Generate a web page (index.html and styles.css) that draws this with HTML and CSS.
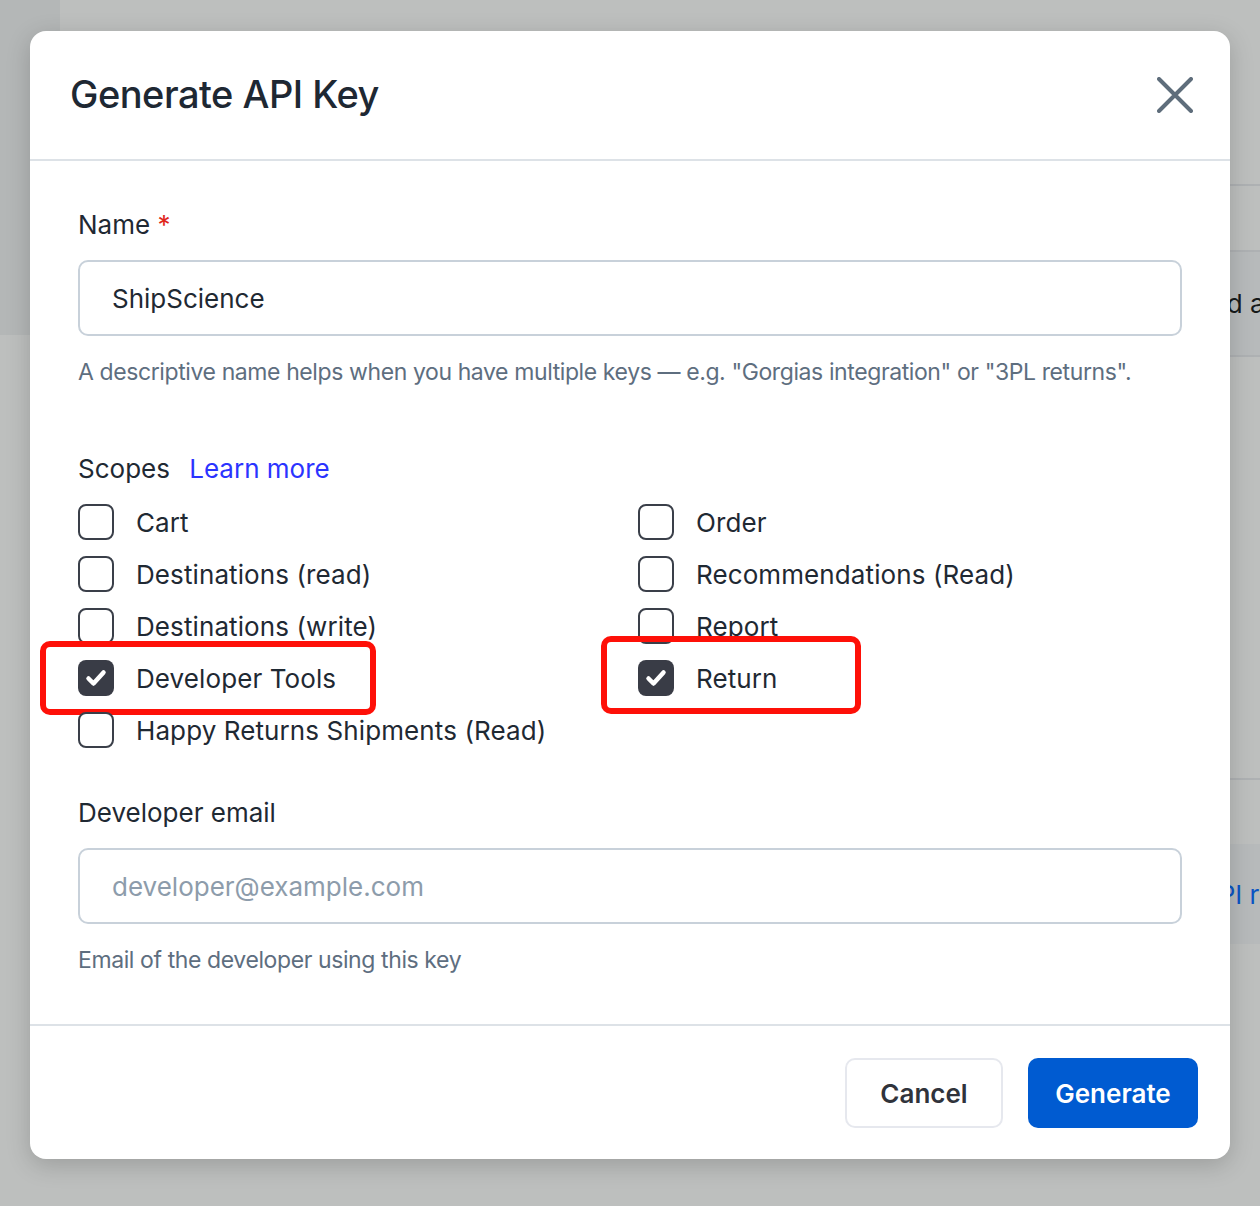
FILE: index.html
```html
<!DOCTYPE html>
<html lang="en">
<head>
    <meta charset="UTF-8">
    <meta name="viewport" content="width=device-width, initial-scale=1.0">
    <title>API Keys</title>
    <link rel="stylesheet" href="styles.css">
</head>
<body>
    <div class="page">
        <aside class="sidebar"></aside>
        <main class="content">
            <div class="row row-line"></div>
            <div class="row row-shaded"><span class="row-text">Keys you have created and</span></div>
            <div class="row row-spacer"></div>
            <div class="row row-shaded row-link"><span class="row-text link">View API reference</span></div>
        </main>
    </div>

    <div class="overlay">
        <div class="modal">
            <div class="modal-header">
                <h1>Generate API Key</h1>
                <button class="close" aria-label="Close">
                    <svg width="36" height="36" viewBox="0 0 36 36">
                        <path d="M2 2L34 34M34 2L2 34" stroke="#5e6d7b" stroke-width="4" stroke-linecap="round" fill="none"/>
                    </svg>
                </button>
            </div>

            <div class="modal-body">
                <div class="field">
                    <label class="field-label">Name <span class="required">*</span></label>
                    <input type="text" class="input" value="ShipScience">
                    <p class="hint">A descriptive name helps when you have multiple keys — e.g. "Gorgias integration" or "3PL returns".</p>
                </div>

                <div class="field scopes">
                    <div class="field-label">Scopes <a href="#" class="learn">Learn more</a></div>
                    <div class="scope-grid">
                        <div class="scope-col">
                            <label class="scope"><span class="box"></span>Cart</label>
                            <label class="scope"><span class="box"></span>Destinations (read)</label>
                            <label class="scope"><span class="box"></span>Destinations (write)</label>
                            <label class="scope">
                                <span class="box checked"><svg width="36" height="36" viewBox="0 0 36 36"><path d="M10.5 18.5L15.5 23.5L25.5 12.5" stroke="#fff" stroke-width="4.5" stroke-linecap="round" stroke-linejoin="round" fill="none"/></svg></span>Developer Tools<span class="mark mark-left"></span>
                            </label>
                            <label class="scope"><span class="box"></span>Happy Returns Shipments (Read)</label>
                        </div>
                        <div class="scope-col">
                            <label class="scope"><span class="box"></span>Order</label>
                            <label class="scope"><span class="box"></span>Recommendations (Read)</label>
                            <label class="scope"><span class="box"></span>Report</label>
                            <label class="scope">
                                <span class="box checked"><svg width="36" height="36" viewBox="0 0 36 36"><path d="M10.5 18.5L15.5 23.5L25.5 12.5" stroke="#fff" stroke-width="4.5" stroke-linecap="round" stroke-linejoin="round" fill="none"/></svg></span>Return<span class="mark mark-right"></span>
                            </label>
                        </div>
                    </div>
                </div>

                <div class="field">
                    <label class="field-label">Developer email</label>
                    <input type="email" class="input" placeholder="developer@example.com">
                    <p class="hint">Email of the developer using this key</p>
                </div>
            </div>

            <div class="modal-footer">
                <button class="btn btn-cancel">Cancel</button>
                <button class="btn btn-primary">Generate</button>
            </div>
        </div>
    </div>
</body>
</html>
```

FILE: styles.css
```css
* {
    box-sizing: border-box;
}

body {
    margin: 0;
    background: #bdbfbe;
    font-family: Inter, "Noto Sans", sans-serif;
    color: #1f2933;
}

/* dimmed page behind the dialog */
.page {
    display: flex;
    min-height: 1206px;
    overflow: hidden;
}

.sidebar {
    width: 60px;
    height: 335px;
    background: #b4b7b7;
}

.content {
    flex: 1;
    padding-top: 184px;
}

.row-line {
    height: 66px;
    border-top: 2px solid #aeb1b3;
}

.row-shaded {
    height: 107px;
    background: #b7babb;
    border-top: 2px solid #aeb1b3;
    border-bottom: 2px solid #aeb1b3;
    display: flex;
    align-items: center;
    justify-content: flex-end;
    overflow: hidden;
}

.row-spacer {
    height: 423px;
    border-bottom: 2px solid #aeb1b3;
}

.row-link {
    margin-top: 64px;
    height: 100px;
    border: none;
}

.row-text {
    font-size: 26px;
    color: #16191a;
    white-space: nowrap;
    margin-right: -36px;
}

.row-text.link {
    color: #0b55c4;
    margin-right: -108px;
}

/* dialog */
.overlay {
    position: absolute;
    top: 31px;
    left: 30px;
}

.modal {
    width: 1200px;
    background: #fff;
    border-radius: 16px;
    box-shadow: 0 6px 24px rgba(0, 0, 0, 0.18);
}

.modal-header {
    height: 130px;
    padding: 0 37px 0 40px;
    display: flex;
    align-items: center;
    justify-content: space-between;
    border-bottom: 2px solid #dde2e7;
}

.modal-header h1 {
    margin: 0;
    font-size: 38px;
    font-weight: 500;
    letter-spacing: -0.5px;
    color: #1e2833;
    padding-bottom: 2px;
}

.close {
    background: none;
    border: none;
    padding: 0;
    width: 36px;
    height: 36px;
    cursor: pointer;
    display: flex;
}

.modal-body {
    padding: 47px 48px 48px;
}

.field + .field {
    margin-top: 48px;
}

.field.scopes {
    margin-top: 64px;
}

.field-label {
    display: block;
    font-size: 26px;
    line-height: 34px;
    color: #1f2933;
}

.required {
    color: #e0261b;
}

.input {
    display: block;
    width: 100%;
    height: 76px;
    margin-top: 18px;
    padding: 0 32px;
    border: 2px solid #c8d1da;
    border-radius: 10px;
    font-family: inherit;
    font-size: 26px;
    color: #1f2933;
    outline: none;
}

.input::placeholder {
    color: #8d9cab;
}

.hint {
    margin: 20px 0 0;
    font-size: 23px;
    line-height: 32px;
    color: #5e6e7f;
    letter-spacing: -0.4px;
}

.learn {
    color: #2b34ff;
    text-decoration: none;
    margin-left: 12px;
}

.scope-grid {
    display: grid;
    grid-template-columns: 1fr 1fr;
    column-gap: 16px;
    margin-top: 18px;
}

.scope-col {
    display: flex;
    flex-direction: column;
    gap: 16px;
}

.scope {
    position: relative;
    display: flex;
    align-items: center;
    gap: 22px;
    height: 36px;
    font-size: 26px;
    letter-spacing: 0.1px;
    color: #1f2933;
    cursor: pointer;
}

.box {
    flex: none;
    width: 36px;
    height: 36px;
    border: 2px solid #3a3f49;
    border-radius: 8px;
    background: #fff;
}

.box.checked {
    background: #393c46;
    border: none;
    display: flex;
}

/* red call-out frames drawn over the checked scopes */
.mark {
    position: absolute;
    border: 6px solid #fe1008;
    border-radius: 10px;
    pointer-events: none;
}

.mark-left {
    left: -38px;
    top: -19px;
    width: 336px;
    height: 74px;
}

.mark-right {
    left: -37px;
    top: -24px;
    width: 260px;
    height: 78px;
}

.modal-footer {
    display: flex;
    justify-content: flex-end;
    gap: 25px;
    padding: 32px 32px 31px;
    border-top: 2px solid #dde2e7;
}

.btn {
    height: 70px;
    border-radius: 10px;
    font-family: inherit;
    font-size: 26px;
    font-weight: 600;
    cursor: pointer;
}

.btn-cancel {
    width: 158px;
    background: #fff;
    border: 2px solid #e6e8ee;
    color: #30333b;
}

.btn-primary {
    width: 170px;
    background: #005bd1;
    border: none;
    color: #fff;
}
```
